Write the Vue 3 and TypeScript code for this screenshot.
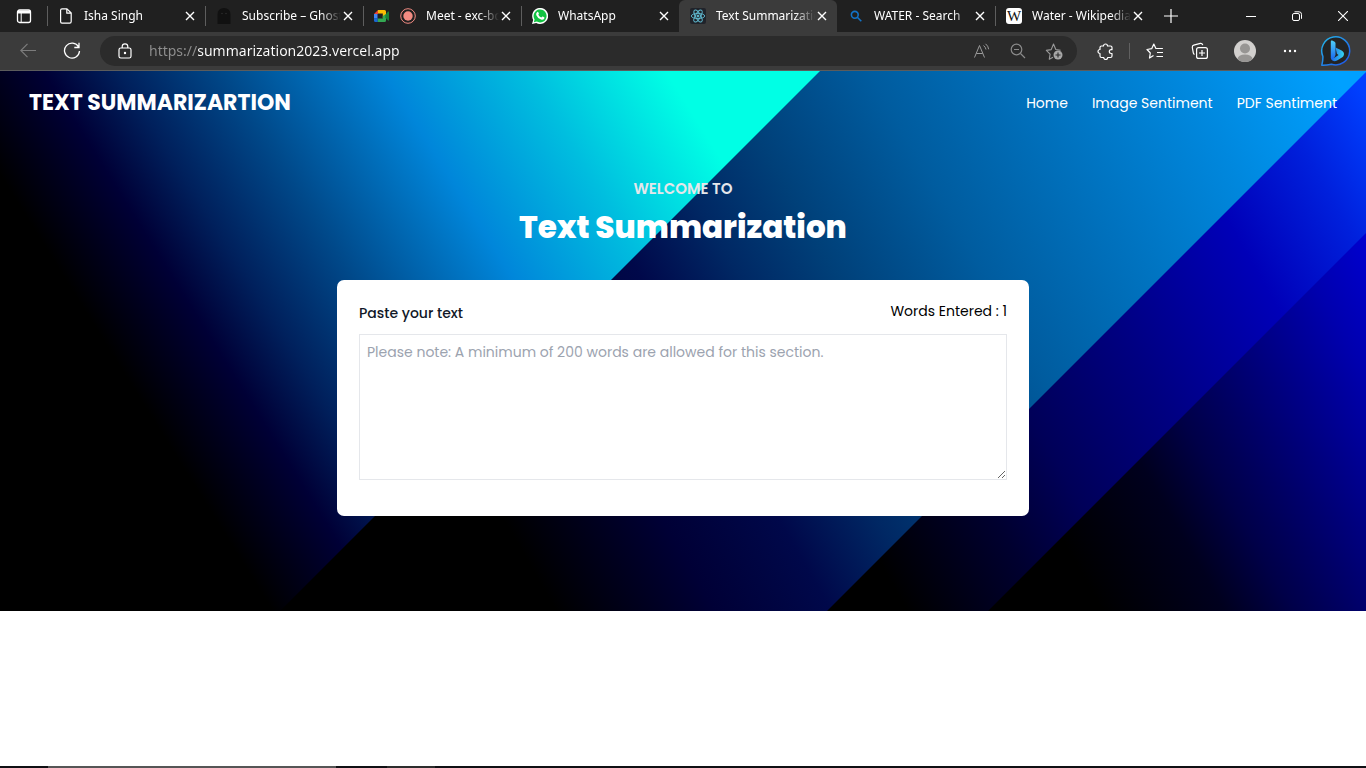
<script setup lang="ts">
import { computed, ref } from 'vue'

interface Tab {
  title: string
  icons: string[]
  active?: boolean
  divided?: boolean
}

const tabs: Tab[] = [
  { title: 'Isha Singh', icons: ['file'], divided: true },
  { title: 'Subscribe – Ghost', icons: ['ghost'], divided: true },
  { title: 'Meet - exc-bqd', icons: ['meet', 'record'], divided: true },
  { title: 'WhatsApp', icons: ['whatsapp'], divided: true },
  { title: 'Text Summarization', icons: ['react'], active: true },
  { title: 'WATER - Search', icons: ['search'] },
  { title: 'Water - Wikipedia', icons: ['wiki'], divided: true },
]

const links = ['Home', 'Image Sentiment', 'PDF Sentiment']

const address = ref('https://summarization2023.vercel.app')
const text = ref('')
const words = computed(() => text.value.trim().split(/\s+/).length)

interface Band {
  id: string
  points: string
  nx: number
  ny: number
  stops: [number, string][]
}

// Diagonal bands of the hero art; stops are distances along each band's normal.
const bands: Band[] = [
  {
    id: 'band-navy',
    points: '0,0 1366,0 1366,540 0,540',
    nx: 0.868,
    ny: -0.496,
    stops: [[690, '#000000'], [796, '#00001e'], [855, '#000048'], [909, '#000066'], [955, '#000080'], [1035, '#0000ae'], [1110, '#0000d2']],
  },
  {
    id: 'band-royal',
    points: '0,0 1528,0 988,540 0,540',
    nx: 0.868,
    ny: -0.496,
    stops: [[520, '#000000'], [643, '#000030'], [723, '#000058'], [847, '#000082'], [992, '#0000b8'], [1093, '#0020dc'], [1174, '#0040ff']],
  },
  {
    id: 'band-azure',
    points: '0,0 1367,0 827,540 0,540',
    nx: 0.868,
    ny: -0.496,
    stops: [[215, '#000000'], [353, '#000036'], [454, '#00084a'], [540, '#002864'], [625, '#004079'], [754, '#005c9f'], [1025, '#0088de'], [1157, '#00a0ff']],
  },
  {
    id: 'band-cyan',
    points: '0,0 820,0 280,540 0,540',
    nx: 0.848,
    ny: -0.53,
    stops: [[-55, '#000000'], [37, '#000036'], [100, '#00205c'], [190, '#00498a'], [325, '#0086da'], [445, '#00bedf'], [565, '#00ffe5']],
  },
]

function axis(b: Band) {
  const a = b.stops[0][0]
  const z = b.stops[b.stops.length - 1][0]
  return { x1: a * b.nx, y1: a * b.ny, x2: z * b.nx, y2: z * b.ny }
}

function offset(b: Band, at: number): number {
  const a = b.stops[0][0]
  const z = b.stops[b.stops.length - 1][0]
  return (at - a) / (z - a)
}
</script>

<template>
  <div class="window">
    <header class="chrome">
      <div class="tabstrip">
        <button class="workspace" aria-label="Tab actions menu">
          <svg width="16" height="16" viewBox="0 0 16 16" fill="none" stroke="#fff">
            <rect x="1.5" y="2" width="13" height="12.5" rx="2" stroke-width="1.3" />
            <path d="M2 4h12" stroke-width="3" />
            <path d="M5.2 5v9" stroke-width="1" />
          </svg>
        </button>
        <div v-for="tab in tabs" :key="tab.title" class="tab" :class="{ active: tab.active, divided: tab.divided }">
          <template v-for="icon in tab.icons" :key="icon">
            <svg v-if="icon === 'file'" class="fav" viewBox="0 0 16 16" fill="none" stroke="#fff" stroke-width="1.2">
              <path d="M2.6 2.2q0-1.4 1.4-1.4h5l4.2 4.2v8.6q0 1.6-1.5 1.6H4q-1.4 0-1.4-1.4z M8.8 1v4.2h4.2" stroke-linejoin="round" />
            </svg>
            <svg v-else-if="icon === 'ghost'" class="fav" viewBox="0 0 16 16">
              <path d="M1.5 16V6.5Q1.8 0 8 0t6.500 6.500V16z" fill="#111" />
              <circle cx="6" cy="5.500" r=".7" fill="#333" /><circle cx="10" cy="5.500" r=".7" fill="#333" />
            </svg>
            <svg v-else-if="icon === 'meet'" class="fav" viewBox="0 0 16 16">
              <path d="M0 6l4-4v4z" fill="#ea4335" />
              <path d="M0 6h3.500v4.500H0z" fill="#4285f4" />
              <path d="M0 10.300h3.800V14H1.500Q0 14 0 12.500z" fill="#1967d2" />
              <path d="M4 2h6.500Q12 2 12 3.500V8L8.800 10V5.500H4z" fill="#fbbc04" />
              <path d="M3.800 10.500h5V8L12 6v6.500q0 1.500-1.500 1.500H3.800z" fill="#34a853" />
              <path d="M11.300 7L14 3.600q1-.6 1 .4v8q0 1-1 .4L11.300 9.500z" fill="#188038" />
            </svg>
            <svg v-else-if="icon === 'record'" class="fav record" viewBox="0 0 16 16">
              <circle cx="8" cy="8" r="7.300" fill="none" stroke="#f28b82" stroke-width="1" />
              <circle cx="8" cy="8" r="4.700" fill="#f28b82" />
            </svg>
            <svg v-else-if="icon === 'whatsapp'" class="fav" viewBox="0 0 16 16">
              <path d="M0 16l1.200-4.100A8 8 0 1 1 4.200 14.900z" fill="#fff" />
              <path d="M1.800 14.200l.8-2.700a6.500 6.500 0 1 1 2.200 2.100z" fill="#12c443" />
              <path d="M5 4.200q.9-.8 1.300 0l.6 1.400q.1.400-.6 1.200 1 1.900 3 2.800l.8-.9q.3-.3.7-.1l1.400.7q.5.300.1 1.200-1 1.800-3.300 1-3.400-1.100-4.800-4.500-.3-1.600.8-2.800z" fill="#fff" />
            </svg>
            <svg v-else-if="icon === 'react'" class="fav" viewBox="0 0 16 16" fill="none" stroke="#61bcd2" stroke-width=".9">
              <rect width="16" height="16" rx="2" fill="#20232a" stroke="none" />
              <ellipse cx="8" cy="8" rx="6.700" ry="2.600" />
              <ellipse cx="8" cy="8" rx="6.700" ry="2.600" transform="rotate(60 8 8)" />
              <ellipse cx="8" cy="8" rx="6.700" ry="2.600" transform="rotate(120 8 8)" />
              <circle cx="8" cy="8" r="1" fill="#61bcd2" />
            </svg>
            <svg v-else-if="icon === 'search'" class="fav" viewBox="0 0 16 16" fill="none" stroke="#1273c9" stroke-width="1.600">
              <circle cx="6.800" cy="6.800" r="3.400" /><path d="M9.300 9.300l4 4" />
            </svg>
            <svg v-else class="fav" viewBox="0 0 16 16">
              <rect width="16" height="16" rx="3" fill="#fff" />
              <text x="8" y="13" text-anchor="middle" font-family="Liberation Serif, serif" font-size="15" fill="#111">W</text>
            </svg>
          </template>
          <a href="#" class="tab-title" @click.prevent>{{ tab.title }}</a>
          <button class="close" :aria-label="`Close ${tab.title}`">
            <svg width="10" height="10" viewBox="0 0 10 10" stroke="#fff" stroke-width="1.400"><path d="M1 1l8 8M9 1l-8 8" /></svg>
          </button>
        </div>
        <button class="new-tab" aria-label="New tab">
          <svg width="14" height="14" viewBox="0 0 14 14" stroke="#fff" stroke-width="1.200"><path d="M7 0v14M0 7h14" /></svg>
        </button>
        <div class="controls">
          <button aria-label="Minimize">
            <svg width="10" height="10" viewBox="0 0 10 10" stroke="#fff"><path d="M0 5.500h10" /></svg>
          </button>
          <button aria-label="Restore">
            <svg width="10" height="10" viewBox="0 0 10 10" fill="none" stroke="#fff">
              <rect x=".5" y="2.500" width="7" height="7" rx="1.500" /><path d="M2.500.8h4.500q2.500 0 2.500 2.500v4.500" />
            </svg>
          </button>
          <button aria-label="Close window">
            <svg width="10" height="10" viewBox="0 0 10 10" stroke="#fff" stroke-width="1.100"><path d="M0 0l10 10M10 0L0 10" /></svg>
          </button>
        </div>
      </div>

      <div class="toolbar">
        <button class="nav-btn" aria-label="Back">
          <svg width="16" height="16" viewBox="0 0 16 16" fill="none" stroke="#7c7c7c" stroke-width="1.200"><path d="M16 7.500H.8M7.500.8L.8 7.500l6.700 6.700" /></svg>
        </button>
        <button class="nav-btn" aria-label="Refresh">
          <svg width="18" height="18" viewBox="0 0 18 18" fill="none" stroke="#fff" stroke-width="1.300"><path d="M15.600 5A7.500 7.500 0 1 0 16.500 9M16 .8v4.700h-4.700" /></svg>
        </button>
        <div class="address">
          <button class="lock" aria-label="Site information">
            <svg width="14" height="16" viewBox="0 0 14 16" fill="none" stroke="#fff" stroke-width="1.200">
              <rect x="1" y="5" width="12" height="10" rx="1.800" /><path d="M4.200 5V3.600a2.800 2.800 0 0 1 5.600 0V5" /><circle cx="7" cy="10" r=".6" fill="#fff" />
            </svg>
          </button>
          <input v-model="address" class="url" type="text" aria-label="Address" spellcheck="false" />
          <button class="field-btn" aria-label="Read aloud">
            <svg width="18" height="16" viewBox="0 0 18 16" fill="none" stroke="#9a9a9a">
              <path d="M1.500 14.500L6.500 2.500l5 12M3.300 10.500h6.400" />
              <path d="M10.500 2.500q2 1.500 2.500 4M12.500.8q2.700 2 3.200 5.500" />
            </svg>
          </button>
          <button class="field-btn" aria-label="Zoom out">
            <svg width="16" height="16" viewBox="0 0 16 16" fill="none" stroke="#8a8a8a" stroke-width="1.200">
              <circle cx="6.500" cy="6.500" r="5.300" /><path d="M10.500 10.500l4.500 4.500M4 6.500h5" />
            </svg>
          </button>
          <button class="field-btn" aria-label="Add to favorites">
            <svg width="18" height="18" viewBox="0 0 18 18" fill="none" stroke="#9a9a9a" stroke-width="1.100">
              <path d="M8 15.200l-3.700 2 .8-5L1.300 8.400l4.900-.8L8.500 2l2.300 5.500 4.800.8" stroke-linejoin="round" />
              <circle cx="13" cy="13" r="4.500" fill="#a6a6a6" stroke="none" /><path d="M13 10.500v5M10.500 13h5" stroke="#2b2b2b" />
            </svg>
          </button>
        </div>
        <button class="nav-btn" aria-label="Extensions">
          <svg width="17" height="17" viewBox="0 0 17 17" fill="none" stroke="#fff" stroke-width="1.200">
            <path d="M4.500 3h2a2 2 0 0 1 4 0h3q1.500 0 1.500 1.500v2.200h-.8a1.900 1.900 0 0 0 0 3.800h.8V13q0 1.500-1.500 1.500h-2.800a2 2 0 0 1-4 0H4.500Q3 14.500 3 13v-2.500a2 2 0 0 1 0-4v-2Q3 3 4.500 3z" stroke-linejoin="round" />
          </svg>
        </button>
        <span class="rule"></span>
        <button class="tool" aria-label="Favorites">
          <svg width="18" height="16" viewBox="0 0 18 16" fill="none" stroke="#fff" stroke-width="1.200">
            <path d="M7.500 12.500l-4 2.500.8-5L1 6.500l4.700-.8L7.800 1l2.100 4.500h7M11 9.500h6M10.500 13.500h6.500" stroke-linejoin="round" />
          </svg>
        </button>
        <button class="tool" aria-label="Collections">
          <svg width="18" height="18" viewBox="0 0 18 18" fill="none" stroke="#fff" stroke-width="1.200">
            <rect x="5.600" y="5.600" width="10.800" height="10.800" rx="2" /><path d="M11 8v6M8 11h6M3.500 12.500Q2.600 12 2.300 10.800L1.300 5.500Q1.100 3.700 2.800 3.200l6.500-1.800q1.800-.3 2.500 1.700" />
          </svg>
        </button>
        <button class="tool" aria-label="Profile">
          <svg width="22" height="22" viewBox="0 0 22 22">
            <defs><clipPath id="avatar-clip"><circle cx="11" cy="11" r="11" /></clipPath></defs>
            <g clip-path="url(#avatar-clip)">
              <rect width="22" height="22" fill="#d2d0ce" />
              <circle cx="11" cy="8.500" r="5" fill="#979593" /><ellipse cx="11" cy="19" rx="7.500" ry="4.500" fill="#979593" />
            </g>
          </svg>
        </button>
        <button class="tool" aria-label="Settings and more">
          <svg width="14" height="4" viewBox="0 0 14 4" fill="#fff"><circle cx="2" cy="2" r="1.200" /><circle cx="7" cy="2" r="1.200" /><circle cx="12" cy="2" r="1.200" /></svg>
        </button>
        <button class="tool bing" aria-label="Discover">
          <svg width="32" height="32" viewBox="0 0 32 32">
            <defs>
              <linearGradient id="ring" x1="0" y1="0" x2="1" y2="1"><stop offset="0" stop-color="#24b8e8" /><stop offset="1" stop-color="#1f50e8" /></linearGradient>
              <linearGradient id="bee" x1="0" y1="0" x2="1" y2="0"><stop offset="0" stop-color="#1b62e8" /><stop offset="1" stop-color="#36d6f0" /></linearGradient>
              <linearGradient id="stem" x1="0" y1="0" x2="0" y2="1"><stop offset="0" stop-color="#4fd0f8" /><stop offset="1" stop-color="#1b6cf0" /></linearGradient>
            </defs>
            <path d="M1.800 30.300Q3 26 2.900 21.500A14 14 0 1 1 11.500 29.200Q6 30.500 1.800 30.300z" fill="#242424" stroke="url(#ring)" stroke-width="1.500" stroke-linejoin="round" />
            <path d="M15.500 12.500l5.700 2.800q3.300 1.700 2.700 4.500-.3 1.600-1.600 2.500l-5.300 3.200q-3.500 1.700-5.500-.8-.7-1-.7-2.500l4 .3 3.700-2.500-1.600-1.300z" fill="url(#bee)" />
            <path d="M10.800 6.500q0-1.500 1.400-.9l2 1q1.300.7 1.300 2v11q0 2-2 3.500-1.500 1-2.300.2-.4-.5-.4-1.300z" fill="url(#stem)" />
          </svg>
        </button>
      </div>
    </header>

    <main class="page">
      <section class="hero">
        <svg class="art" viewBox="0 0 1366 540" preserveAspectRatio="none" aria-hidden="true">
          <defs>
            <linearGradient v-for="b in bands" :id="b.id" :key="b.id" gradientUnits="userSpaceOnUse" v-bind="axis(b)">
              <stop v-for="s in b.stops" :key="s[0]" :offset="offset(b, s[0])" :stop-color="s[1]" />
            </linearGradient>
          </defs>
          <polygon v-for="b in bands" :key="b.id" :points="b.points" :fill="`url(#${b.id})`" />
        </svg>

        <nav class="navbar">
          <a href="#" class="brand">TEXT SUMMARIZARTION</a>
          <div class="links">
            <a v-for="l in links" :key="l" href="#">{{ l }}</a>
          </div>
        </nav>

        <div class="intro">
          <p class="eyebrow">WELCOME TO</p>
          <h1>Text Summarization</h1>
        </div>

        <form class="card" @submit.prevent>
          <div class="card-head">
            <label for="source">Paste your text</label>
            <span class="count">Words Entered : {{ words }}</span>
          </div>
          <textarea id="source" v-model="text" placeholder="Please note: A minimum of 200 words are allowed for this section."></textarea>
        </form>
      </section>
    </main>

    <footer class="taskbar"><span class="task current"></span><span class="task"></span></footer>
  </div>
</template>

<style>
body {
  margin: 0;
  background: #fff;
}
</style>

<style scoped>
.window {
  display: flex;
  flex-direction: column;
  min-height: 100vh;
  font-family: Poppins, Inter, "Liberation Sans", sans-serif;
}

* {
  box-sizing: border-box;
}

button {
  display: flex;
  align-items: center;
  justify-content: center;
  flex: none;
  padding: 0;
  border: 0;
  background: none;
}

a {
  color: inherit;
  text-decoration: none;
}

.chrome {
  font-family: "Segoe UI", "Noto Sans", "Open Sans", sans-serif;
  color: #fff;
  background: #3b3b3b;
  border-bottom: 1px solid #5c5c5c;
}

.tabstrip {
  display: flex;
  height: 32px;
  background: #202020;
}

.workspace {
  width: 47px;
}

.tab {
  position: relative;
  display: flex;
  align-items: center;
  flex: 0 1 158px;
  min-width: 0;
  padding: 0 10px 0 11px;
}

.tab.divided::before {
  content: "";
  position: absolute;
  left: 0;
  top: 6px;
  width: 1px;
  height: 20px;
  background: #5e5e5e;
}

.tab.active {
  background: #3b3b3b;
  border-radius: 6px 6px 0 0;
}

.fav {
  flex: none;
  width: 16px;
  height: 16px;
}

.record {
  margin-left: 10px;
}

.tab-title {
  flex: 1;
  min-width: 0;
  margin: 0 2px 0 10px;
  overflow: hidden;
  font-size: 12px;
  line-height: 16px;
  white-space: nowrap;
  mask-image: linear-gradient(to right, #000 calc(100% - 20px), transparent);
}

.close {
  width: 10px;
  height: 16px;
}

.new-tab {
  width: 36px;
}

.controls {
  display: flex;
  margin-left: auto;
}

.controls button {
  width: 46px;
}

.toolbar {
  display: flex;
  align-items: center;
  height: 38px;
  padding: 0 6px;
}

.nav-btn {
  width: 44px;
  height: 30px;
}

.address {
  display: flex;
  align-items: center;
  flex: 1;
  min-width: 0;
  height: 30px;
  margin: 0 6px;
  padding-right: 5px;
  border-radius: 15px;
  background: #2b2b2b;
}

.lock {
  width: 49px;
  height: 30px;
}

.url {
  flex: 1;
  min-width: 0;
  padding: 0;
  border: 0;
  outline: 0;
  font-family: inherit;
  font-size: 14px;
  line-height: 20px;
  color: transparent;
  background: linear-gradient(to right, #8f8f8f 48px, #fff 48px);
  background-clip: text;
}

.field-btn {
  width: 36px;
  height: 30px;
}

.rule {
  width: 1px;
  height: 16px;
  margin: 0 2px;
  background: #606060;
}

.tool {
  width: 45px;
  height: 34px;
}

.bing {
  width: 48px;
}

.page {
  flex: 1;
  background: #fff;
}

.hero {
  position: relative;
  padding: 0 29px 95px;
  color: #fff;
  background: #000;
}

.art {
  position: absolute;
  inset: 0;
  width: 100%;
  height: 100%;
}

.navbar,
.intro,
.card {
  position: relative;
}

.navbar {
  display: flex;
  align-items: center;
  justify-content: space-between;
  height: 64px;
}

.brand {
  font-size: 22px;
  font-weight: 700;
  line-height: 32px;
}

.links {
  display: flex;
  gap: 24px;
  font-size: 14px;
  line-height: 20px;
}

.intro {
  padding: 44px 0 33px;
  text-align: center;
}

.eyebrow {
  margin: 0;
  font-size: 15px;
  font-weight: 600;
  line-height: 20px;
  color: #e5e7eb;
}

h1 {
  margin: 8px 0 0;
  font-size: 31px;
  font-weight: 800;
  line-height: 40px;
}

.card {
  max-width: 692px;
  margin: 0 auto;
  padding: 22px 22px 36px;
  border-radius: 7px;
  color: #111827;
  background: #fff;
}

.card-head {
  display: flex;
  justify-content: space-between;
  height: 32px;
  font-size: 14px;
}

.card-head label {
  font-weight: 500;
  line-height: 22px;
}

.count {
  line-height: 18px;
  color: #000;
}

textarea {
  display: block;
  width: 100%;
  height: 146px;
  padding: 7px;
  border: 1px solid #e5e7eb;
  outline: 0;
  resize: vertical;
  font-family: inherit;
  font-size: 14px;
  line-height: 20px;
  color: #111827;
  background: #fff;
}

textarea::placeholder {
  color: #9ca3af;
}

.taskbar {
  display: flex;
  gap: 51px;
  height: 2px;
  padding-left: 48px;
  background: #101014;
}

.task {
  width: 48px;
  background: #2d2d2d;
}

.task.current {
  width: 288px;
  background: #565656;
}
</style>
